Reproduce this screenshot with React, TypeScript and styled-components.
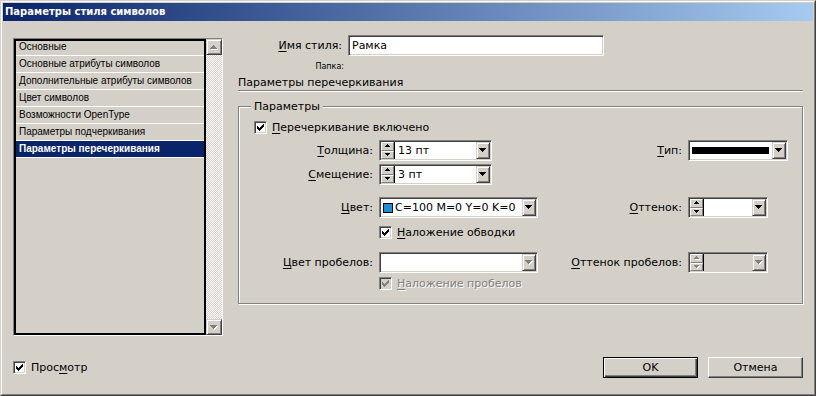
import React from "react";
import styled, { createGlobalStyle, css } from "styled-components";

const FACE = "#d4d0c8";
const SHADOW = "#808080";
const DARK = "#404040";
const LIGHT = "#ffffff";
const NAVY = "#0a246a";

const GlobalStyle = createGlobalStyle`
  html, body {
    margin: 0;
    padding: 0;
    background: ${FACE};
  }
  body {
    font-family: "DejaVu Sans", "Liberation Sans", sans-serif;
    font-size: 11px;
    line-height: 13px;
    color: #000;
  }
  * {
    box-sizing: border-box;
  }
  u {
    text-decoration-thickness: 1px;
    text-underline-offset: 2px;
  }
`;

// classic 3d edges; padding keeps the inner inset ring clear of children
const sunken = css`
  border: 1px solid;
  border-color: ${SHADOW} ${LIGHT} ${LIGHT} ${SHADOW};
  box-shadow: inset 1px 1px 0 ${DARK}, inset -1px -1px 0 ${FACE};
  padding: 1px;
`;

const raised = css`
  border: 1px solid;
  border-color: ${FACE} ${DARK} ${DARK} ${FACE};
  box-shadow: inset 1px 1px 0 ${LIGHT}, inset -1px -1px 0 ${SHADOW};
  background: ${FACE};
`;

const Window = styled.div`
  width: 816px;
  height: 396px;
  border: 1px solid;
  border-color: ${FACE} ${DARK} ${DARK} ${FACE};
  display: flex;
`;

const Frame = styled.div`
  flex: 1;
  display: flex;
  flex-direction: column;
  border: 1px solid;
  border-color: ${LIGHT} ${SHADOW} ${SHADOW} ${LIGHT};
  padding: 1px;
`;

const TitleBar = styled.div`
  flex: none;
  height: 18px;
  display: flex;
  align-items: center;
  padding-left: 2px;
  background: linear-gradient(to right, ${NAVY}, #a6caf0);
  color: #fff;
  font-weight: bold;
  font-size: 10px;
  line-height: 12px;
`;

const Body = styled.div`
  flex: 1;
  display: flex;
  flex-direction: column;
  padding: 14px 10px 0;
`;

const MainRow = styled.div`
  display: flex;
  align-items: flex-start;
  gap: 15px;
`;

/* ---------- list ---------- */

const ListBox = styled.div`
  flex: none;
  width: 210px;
  height: 298px;
  margin-top: 3px;
  border: 1px solid;
  border-color: ${SHADOW} ${LIGHT} ${LIGHT} ${SHADOW};
  display: flex;
`;

const ListArea = styled.div`
  flex: 1;
  border: 2px solid #000;
  overflow: hidden;
  background: ${FACE};
`;

const ListScroll = styled.div`
  margin-top: -2px;
`;

const ListItem = styled.div<{ $selected?: boolean }>`
  height: 17px;
  line-height: 16px;
  padding-left: 3px;
  border-bottom: 1px solid ${LIGHT};
  font-family: "Liberation Sans", sans-serif;
  font-size: 10px;
  white-space: nowrap;
  ${(p) =>
    p.$selected &&
    css`
      background: ${NAVY};
      color: #fff;
      font-weight: bold;
    `}
`;

const ScrollBar = styled.div`
  flex: none;
  width: 16px;
  display: flex;
  flex-direction: column;
`;

const ScrollButton = styled.div`
  ${raised};
  flex: none;
  height: 16px;
  display: flex;
  align-items: center;
  justify-content: center;
`;

const ScrollTrack = styled.div`
  flex: 1;
  background: repeating-conic-gradient(${LIGHT} 0 25%, ${FACE} 0 50%) 0 0 / 2px 2px;
`;

/* ---------- right panel ---------- */

const RightPanel = styled.div`
  flex: 1;
  min-width: 0;
  display: flex;
  flex-direction: column;
`;

const NameRow = styled.div`
  display: flex;
  align-items: center;
  height: 21px;
`;

const NameLabel = styled.div`
  width: 104px;
  margin-right: 6px;
  text-align: right;
  white-space: nowrap;
`;

const TextField = styled.div`
  ${sunken};
  width: 256px;
  height: 21px;
  padding-left: 3px;
  line-height: 17px;
  background: #fff;
`;

const FolderLabel = styled.div`
  width: 106px;
  margin-top: 6px;
  text-align: right;
  font-size: 8px;
  line-height: 10px;
`;

const Heading = styled.div`
  margin-top: 4px;
  line-height: 14px;
  white-space: nowrap;
`;

const Rule = styled.div`
  height: 2px;
  border-top: 1px solid ${SHADOW};
  border-bottom: 1px solid ${LIGHT};
`;

const GroupBox = styled.div`
  position: relative;
  margin-top: 14px;
  border: 1px solid ${SHADOW};
  box-shadow: inset 1px 1px 0 ${LIGHT}, 1px 1px 0 ${LIGHT};
  padding: 14px 14px 13px 0;
`;

const GroupLegend = styled.div`
  position: absolute;
  top: -7px;
  left: 12px;
  padding: 0 3px;
  line-height: 13px;
  background: ${FACE};
`;

const CheckRow = styled.label`
  display: flex;
  align-items: center;
  padding-left: 15px;
`;

const FieldRow = styled.div<{ $top: number }>`
  display: grid;
  grid-template-columns: 134px 160px 1fr 100px;
  column-gap: 6px;
  align-items: center;
  margin-top: ${(p) => p.$top}px;
`;

const FieldLabel = styled.div<{ $col?: number }>`
  grid-column: ${(p) => p.$col ?? "auto"};
  text-align: right;
  white-space: nowrap;
`;

const Slot = styled.div<{ $col: number }>`
  grid-column: ${(p) => p.$col};
  display: flex;
  align-items: center;
`;

const CheckText = styled.span<{ $disabled?: boolean }>`
  margin-left: 5px;
  white-space: nowrap;
  ${(p) =>
    p.$disabled &&
    css`
      color: ${SHADOW};
      text-shadow: 1px 1px 0 ${LIGHT};
    `}
`;

const CheckBox = styled.span<{ $disabled?: boolean }>`
  ${sunken};
  flex: none;
  width: 13px;
  height: 13px;
  display: flex;
  align-items: center;
  justify-content: center;
  background: ${(p) => (p.$disabled ? FACE : "#fff")};
`;

/* ---------- combos ---------- */

const ComboFrame = styled.div<{ $w: number; $muted?: boolean }>`
  ${sunken};
  flex: none;
  width: ${(p) => p.$w}px;
  height: 21px;
  display: flex;
  background: ${(p) => (p.$muted ? FACE : "#fff")};
`;

const ComboText = styled.div`
  flex: 1;
  min-width: 0;
  display: flex;
  align-items: center;
  gap: 2px;
  padding-left: 3px;
  white-space: nowrap;
  overflow: hidden;
`;

const LineSample = styled.div`
  flex: 1;
  height: 7px;
  margin: 0 3px 0 -1px;
  background: #000;
`;

const Swatch = styled.span`
  flex: none;
  width: 10px;
  height: 10px;
  margin-left: -1px;
  border: 1px solid #000;
  background: #1b8fd2;
`;

const DropButton = styled.div`
  ${raised};
  flex: none;
  width: 14px;
  display: flex;
  align-items: center;
  justify-content: center;
`;

const SpinStack = styled.div`
  flex: none;
  width: 14px;
  display: flex;
  flex-direction: column;
  border-right: 1px solid #000;
`;

const SpinButton = styled.div`
  flex: 1;
  border: 1px solid;
  border-color: ${LIGHT} ${SHADOW} ${SHADOW} ${LIGHT};
  background: ${FACE};
  display: flex;
  align-items: center;
  justify-content: center;
`;

/* ---------- footer ---------- */

const Footer = styled.div`
  display: flex;
  align-items: center;
  margin-top: 21px;
  height: 21px;
`;

const Spacer = styled.div`
  flex: 1;
`;

const PushButton = styled.button<{ $default?: boolean }>`
  width: 95px;
  height: 21px;
  padding: 0;
  margin-left: 10px;
  font: inherit;
  color: #000;
  background: ${FACE};
  ${(p) =>
    p.$default
      ? css`
          border: 1px solid #000;
          box-shadow: inset 1px 1px 0 ${LIGHT}, inset -1px -1px 0 ${DARK},
            inset -2px -2px 0 ${SHADOW};
        `
      : css`
          border: 1px solid;
          border-color: ${LIGHT} ${DARK} ${DARK} ${LIGHT};
          box-shadow: inset -1px -1px 0 ${SHADOW}, inset 1px 1px 0 ${FACE};
        `}
`;

/* ---------- small drawings ---------- */

const ARROW_BIG = "M0 0h7v1h-1v1h-1v1h-1v1h-1v-1h-1v-1h-1v-1h-1z";
const ARROW_SMALL = "M0 0h5v1h-1v1h-1v1h-1v-1h-1v-1h-1z";
const CHECK =
  "M0 2h1v3h-1z M1 3h1v3h-1z M2 4h1v3h-1z M3 3h1v3h-1z M4 2h1v3h-1z M5 1h1v3h-1z M6 0h1v3h-1z";

type ArrowProps = { dir: "up" | "down"; small?: boolean; disabled?: boolean };

const Arrow = ({ dir, small, disabled }: ArrowProps) => {
  const w = small ? 5 : 7;
  const h = small ? 3 : 4;
  const d = small ? ARROW_SMALL : ARROW_BIG;
  const flip = dir === "up" ? `translate(0 ${h}) scale(1 -1)` : "";
  return (
    <svg width={w + 1} height={h + 1} viewBox={`0 0 ${w + 1} ${h + 1}`} shapeRendering="crispEdges">
      {disabled && <path d={d} transform={`translate(1 1) ${flip}`} fill={LIGHT} />}
      <path d={d} transform={flip} fill={disabled ? SHADOW : "#000"} />
    </svg>
  );
};

const Check = ({ disabled }: { disabled?: boolean }) => (
  <CheckBox $disabled={disabled}>
    <svg width="7" height="7" viewBox="0 0 7 7" shapeRendering="crispEdges">
      <path d={CHECK} fill={disabled ? SHADOW : "#000"} />
    </svg>
  </CheckBox>
);

type ComboProps = {
  width: number;
  disabled?: boolean;
  muted?: boolean;
  spin?: boolean;
  children?: React.ReactNode;
};

const Combo = ({ width, disabled, muted, spin, children }: ComboProps) => (
  <ComboFrame $w={width} $muted={muted}>
    {spin && (
      <SpinStack>
        <SpinButton>
          <Arrow dir="up" small disabled={disabled} />
        </SpinButton>
        <SpinButton>
          <Arrow dir="down" small disabled={disabled} />
        </SpinButton>
      </SpinStack>
    )}
    <ComboText>{children}</ComboText>
    <DropButton>
      <Arrow dir="down" disabled={disabled} />
    </DropButton>
  </ComboFrame>
);

const listItems = [
  "Основные",
  "Основные атрибуты символов",
  "Дополнительные атрибуты символов",
  "Цвет символов",
  "Возможности OpenType",
  "Параметры подчеркивания",
  "Параметры перечеркивания",
];

const App = () => {
  return (
    <>
      <GlobalStyle />
      <Window>
        <Frame>
          <TitleBar>Параметры стиля символов</TitleBar>
          <Body>
            <MainRow>
              <ListBox>
                <ListArea>
                  <ListScroll>
                    {listItems.map((item, i) => (
                      <ListItem key={item} $selected={i === listItems.length - 1}>
                        {item}
                      </ListItem>
                    ))}
                  </ListScroll>
                </ListArea>
                <ScrollBar>
                  <ScrollButton>
                    <Arrow dir="up" disabled />
                  </ScrollButton>
                  <ScrollTrack />
                  <ScrollButton>
                    <Arrow dir="down" disabled />
                  </ScrollButton>
                </ScrollBar>
              </ListBox>

              <RightPanel>
                <NameRow>
                  <NameLabel>
                    <u>И</u>мя стиля:
                  </NameLabel>
                  <TextField>Рамка</TextField>
                </NameRow>
                <FolderLabel>Папка:</FolderLabel>
                <Heading>Параметры перечеркивания</Heading>
                <Rule />

                <GroupBox>
                  <GroupLegend>Параметры</GroupLegend>
                  <CheckRow>
                    <Check />
                    <CheckText>
                      <u>П</u>еречеркивание включено
                    </CheckText>
                  </CheckRow>

                  <FieldRow $top={6}>
                    <FieldLabel>
                      <u>Т</u>олщина:
                    </FieldLabel>
                    <Slot $col={2}>
                      <Combo width={113} spin>
                        13 пт
                      </Combo>
                    </Slot>
                    <FieldLabel>
                      <u>Т</u>ип:
                    </FieldLabel>
                    <Slot $col={4}>
                      <Combo width={100}>
                        <LineSample />
                      </Combo>
                    </Slot>
                  </FieldRow>

                  <FieldRow $top={3}>
                    <FieldLabel>
                      <u>С</u>мещение:
                    </FieldLabel>
                    <Slot $col={2}>
                      <Combo width={113} spin>
                        3 пт
                      </Combo>
                    </Slot>
                  </FieldRow>

                  <FieldRow $top={12}>
                    <FieldLabel>
                      <u>Ц</u>вет:
                    </FieldLabel>
                    <Slot $col={2}>
                      <Combo width={159}>
                        <Swatch />
                        C=100 M=0 Y=0 K=0
                      </Combo>
                    </Slot>
                    <FieldLabel>
                      <u>О</u>ттенок:
                    </FieldLabel>
                    <Slot $col={4}>
                      <Combo width={80} spin />
                    </Slot>
                  </FieldRow>

                  <FieldRow $top={8}>
                    <Slot $col={2}>
                      <Check />
                      <CheckText>
                        <u>Н</u>аложение обводки
                      </CheckText>
                    </Slot>
                  </FieldRow>

                  <FieldRow $top={13}>
                    <FieldLabel>
                      <u>Ц</u>вет пробелов:
                    </FieldLabel>
                    <Slot $col={2}>
                      <Combo width={159} disabled />
                    </Slot>
                    <FieldLabel $col={3}>
                      <u>О</u>ттенок пробелов:
                    </FieldLabel>
                    <Slot $col={4}>
                      <Combo width={80} spin disabled muted />
                    </Slot>
                  </FieldRow>

                  <FieldRow $top={4}>
                    <Slot $col={2}>
                      <Check disabled />
                      <CheckText $disabled>
                        <u>Н</u>аложение пробелов
                      </CheckText>
                    </Slot>
                  </FieldRow>
                </GroupBox>
              </RightPanel>
            </MainRow>

            <Footer>
              <Check />
              <CheckText>
                Прос<u>м</u>отр
              </CheckText>
              <Spacer />
              <PushButton $default>OK</PushButton>
              <PushButton>Отмена</PushButton>
            </Footer>
          </Body>
        </Frame>
      </Window>
    </>
  );
};

export default App;
